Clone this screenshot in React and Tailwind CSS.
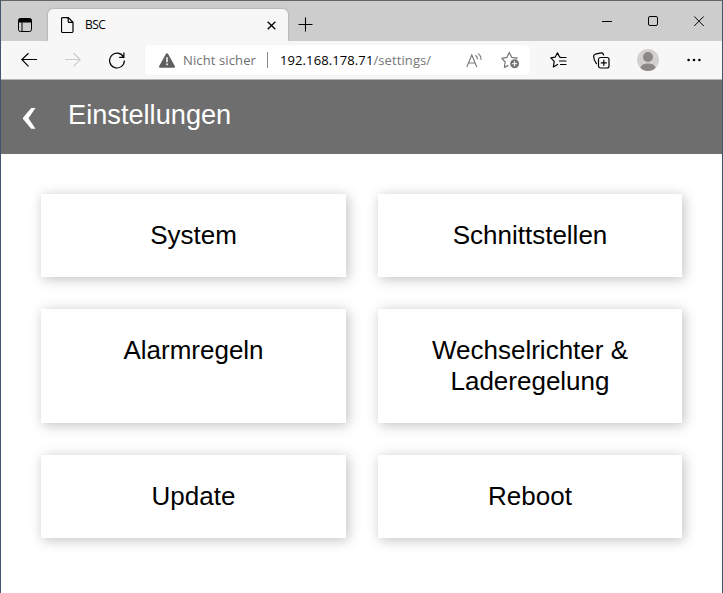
import React from 'react';

const stroke = { fill: 'none', stroke: 'currentColor' };

function TitleBar() {
  return (
    <div className="flex h-10 bg-[#cdcdcd]">
      <div className="flex w-[47px] shrink-0 pl-[17px] pt-[17px]">
        <svg width="14" height="14" viewBox="0 0 14 14" {...stroke}>
          <rect x=".5" y=".5" width="13" height="13" rx="2" />
          <path d="M1 1h12v3H1z" fill="currentColor" />
          <path d="M4 4v9.5" />
        </svg>
      </div>
      <div className="mt-2 flex h-8 w-[240px] shrink-0 items-start rounded-t-[5px] bg-[#f7f7f7] shadow-[0_0_2px_rgba(0,0,0,0.35)] [clip-path:inset(-4px_-4px_0_-4px)]">
        <svg className="ml-[13px] mt-2" width="13" height="16" viewBox="0 0 13 16" {...stroke}>
          <path d="M1.5.6h5.8l4.7 4.7v9a1.2 1.2 0 0 1-1.2 1.2H1.7a1.2 1.2 0 0 1-1.2-1.2V1.7C.5 1 .9.6 1.5.6zM7.2.8v3.7c0 .5.4.9.9.9h3.7" strokeWidth="1.2" />
        </svg>
        <span className="ml-[11px] mt-2 w-[182px] shrink-0 font-['Open_Sans','Noto_Sans',sans-serif] text-[12px] leading-4 tracking-[-0.6px]">BSC</span>
        <svg className="mt-3 shrink-0" width="9" height="9" viewBox="0 0 9 9" {...stroke}>
          <path d="M.7.7l7.6 7.6M8.3.7L.7 8.3" strokeWidth="1.3" />
        </svg>
      </div>
      <svg className="ml-[10px] mt-4 shrink-0" width="15" height="15" viewBox="0 0 15 15" {...stroke}>
        <path d="M7.5 0.5v14M0.5 7.5h14" strokeWidth="1.1" />
      </svg>
      <div className="ml-auto flex gap-9 pr-[18px] pt-[15px]">
        <svg width="10" height="11" viewBox="0 0 10 11" {...stroke}><path d="M0 5.5h10" /></svg>
        <svg width="10" height="11" viewBox="0 0 10 11" {...stroke}><rect x=".5" y=".5" width="9" height="9" rx="1.5" /></svg>
        <svg width="10" height="11" viewBox="0 0 10 11" {...stroke}><path d="M.2.4l9.6 9.6M9.8.4L.2 10" /></svg>
      </div>
    </div>
  );
}

function Toolbar() {
  return (
    <div className="flex h-[39px] items-center border-b border-[#b5b5b5] bg-[#f7f7f7]">
      <svg className="ml-5 shrink-0" width="16" height="14" viewBox="0 0 16 14" {...stroke}>
        <path d="M.7 6.5H16M7.5.2L.8 6.5l6.7 6.8" strokeWidth="1.2" />
      </svg>
      <svg className="ml-7 shrink-0 text-[#cbcbcb]" width="16" height="14" viewBox="0 0 16 14" {...stroke}>
        <path d="M0 6.5h15.3M8.5.2l6.7 6.3-6.7 6.8" strokeWidth="1.2" />
      </svg>
      <svg className="ml-7 shrink-0" width="16" height="17" viewBox="0 0 16 17" {...stroke}>
        <path d="M14.6 5.2A7.4 7.4 0 1 0 15.4 8.5M14.9 .6v4.8H10.2" strokeWidth="1.2" />
      </svg>
      <div className="ml-5 flex h-[30px] w-[385px] shrink-0 items-center rounded-[4px] bg-white font-['Open_Sans','Noto_Sans',sans-serif] text-[13px] leading-5 shadow-[0_0_2px_rgba(0,0,0,0.06)]">
        <svg className="ml-[14px] shrink-0" width="16" height="15" viewBox="0 0 16 15">
          <path d="M7 .8a1.1 1.1 0 0 1 2 0l6.8 12.3c.4.8-.1 1.6-1 1.6H1.2c-.9 0-1.4-.8-1-1.6z" fill="#5f5f5f" />
          <path d="M8 4.3v5M8 10.6v1.7" stroke="#fff" strokeWidth="1.5" />
        </svg>
        <span className="ml-2 w-[84px] shrink-0 whitespace-nowrap tracking-[0.12px] text-[#707070]">Nicht sicher</span>
        <span className="h-4 w-px shrink-0 bg-[#8a8a8a]" />
        <span className="ml-3 w-[186px] shrink-0 whitespace-nowrap tracking-[0.1px] text-black">192.168.178.71<span className="text-[#767676]">/settings/</span></span>
        <svg className="shrink-0 text-[#767676]" width="17" height="15" viewBox="0 0 17 15" {...stroke}>
          <path d="M.8 14L5.8 2l5 12M2.6 10H9M9.4 2.2c1.5.9 2.1 2.3 2 4M12 .6c2.2 1.4 3.2 3.6 3 6.2" strokeWidth="1.1" />
        </svg>
        <svg className="ml-[18px] shrink-0 text-[#767676]" width="19" height="18" viewBox="0 0 19 18" {...stroke}>
          <path d="M7.4 14.4l-4 2 .8-5.4L.8 7.3l5-.9L8.3 1.4l2.5 5 5.3.8-.8.9" strokeWidth="1.2" strokeLinejoin="round" />
          <circle cx="13.6" cy="12.7" r="4.5" fill="currentColor" stroke="none" />
          <path d="M13.6 10.2v5M11.1 12.7h5" stroke="#fff" />
        </svg>
      </div>
      <svg className="ml-5 shrink-0" width="17" height="16" viewBox="0 0 17 16" {...stroke}>
        <path d="M8 12.3l-4.6 2.6.8-5.6L.8 5.9l4.3-.7L7.5.8l2.2 4.4 2.2.4M10 5.5h6.5M9 9h7.5M10 12.5h6.5" strokeWidth="1.2" strokeLinejoin="round" />
      </svg>
      <svg className="ml-[26px] shrink-0" width="17" height="17" viewBox="0 0 17 17" {...stroke}>
        <rect x="5.5" y="5.5" width="10.5" height="10.5" rx="2" strokeWidth="1.2" />
        <path d="M10.8 7.8v6M7.8 10.8h6M3.7 12.2C2.4 10.4.5 6.1.7 3.8.9 2.5 1.9 2.1 3.2 1.8l5-1c1.4-.2 2.1.5 2.5 2.6" strokeWidth="1.2" />
      </svg>
      <svg className="ml-[27px] shrink-0" width="22" height="22" viewBox="0 0 22 22">
        <circle cx="11" cy="11" r="11" fill="#d2d0ce" />
        <circle cx="11" cy="8" r="5" fill="#8a8886" />
        <path d="M3.3 18.7C5 15.3 7.5 14.5 11 14.5s6 .8 7.7 4.2A11 11 0 0 1 11 22a11 11 0 0 1-7.7-3.3z" fill="#8a8886" />
      </svg>
      <svg className="ml-7 shrink-0" width="14" height="4" viewBox="0 0 14 4" fill="currentColor">
        <circle cx="1.6" cy="2" r="1.3" /><circle cx="7" cy="2" r="1.3" /><circle cx="12.4" cy="2" r="1.3" />
      </svg>
    </div>
  );
}

const entries = ['System', 'Schnittstellen', 'Alarmregeln', 'Wechselrichter & Laderegelung', 'Update', 'Reboot'];

export default function App() {
  return (
    <div className="flex h-[593px] w-[723px] flex-col overflow-hidden border-x border-t border-x-[#42576b] border-t-[#686466] bg-white text-black">
      <TitleBar />
      <Toolbar />
      <header className="flex h-[74px] shrink-0 bg-[#6e6e6e] font-['Liberation_Sans',Arial,sans-serif] text-white">
        <svg className="ml-[22px] mt-7 shrink-0" width="13" height="21" viewBox="0 0 13 21">
          <path d="M8.2 0H12.5L5.5 10.3L12.5 20.7H8.2L0 10.9V9.8z" fill="currentColor" />
        </svg>
        <h1 className="ml-8 mt-[19px] text-[27.2px] leading-[31px]">Einstellungen</h1>
      </header>
      <main className="grid grid-cols-[305px_304px] gap-8 pl-10 pt-10 font-['Liberation_Sans',Arial,sans-serif] text-[26px] leading-[31px]">
        {entries.map((label) => (
          <div key={label} className="bg-white p-[26px] text-center shadow-[2px_2px_12px_rgba(0,0,0,0.25)]">
            {label}
          </div>
        ))}
      </main>
    </div>
  );
}
